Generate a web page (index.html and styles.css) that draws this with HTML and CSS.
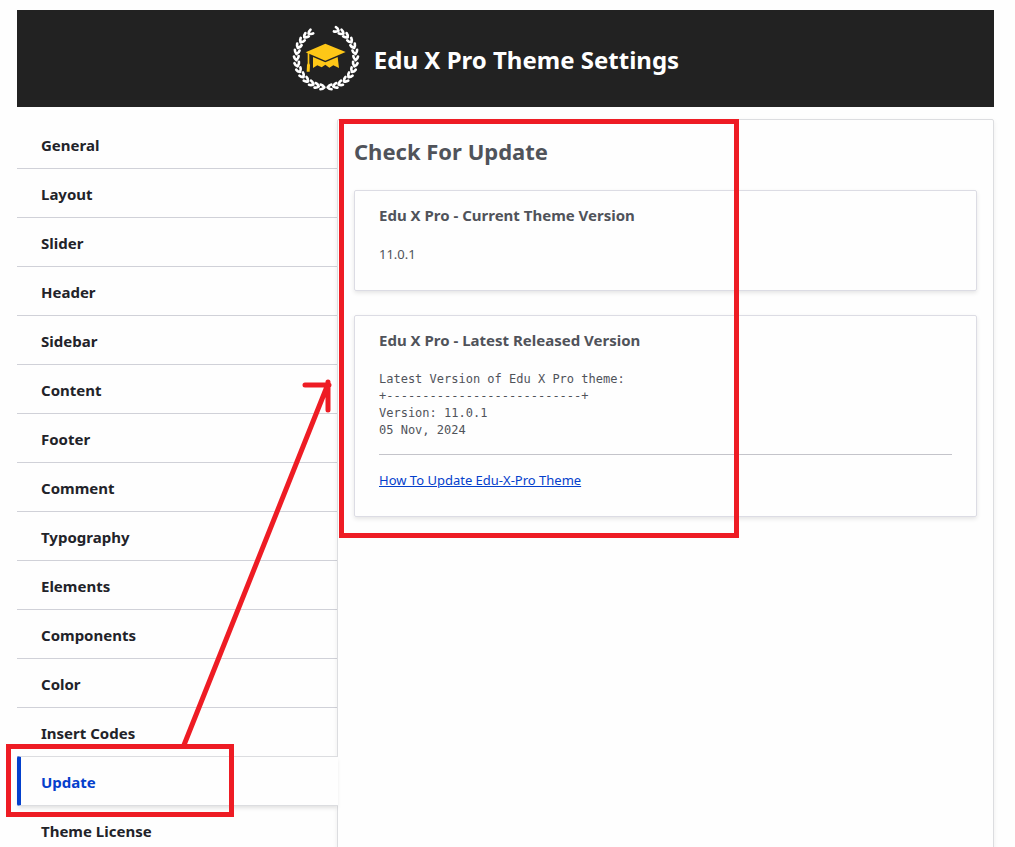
FILE: index.html
```
<!DOCTYPE html>
<html lang="en">
<head>
<meta charset="utf-8">
<title>Edu X Pro Theme Settings</title>
<link rel="stylesheet" href="styles.css">
</head>
<body>
<div class="page">
  <header class="header">
    <svg class="logo" viewBox="36 73 204 198" aria-hidden="true">
      <defs>
        <path id="leaf" d="M6 -89Q2 -95 -5 -96M5 -88Q0 -82 -6 -82"/>
        <g id="branch">
          <use href="#leaf" transform="rotate(32)"/>
          <use href="#leaf" transform="rotate(43)"/>
          <use href="#leaf" transform="rotate(55)"/>
          <use href="#leaf" transform="rotate(67)"/>
          <use href="#leaf" transform="rotate(79)"/>
          <use href="#leaf" transform="rotate(91)"/>
          <use href="#leaf" transform="rotate(103)"/>
          <use href="#leaf" transform="rotate(115)"/>
          <use href="#leaf" transform="rotate(127)"/>
          <use href="#leaf" transform="rotate(139)"/>
          <use href="#leaf" transform="rotate(151)"/>
          <use href="#leaf" transform="rotate(162)"/>
          <use href="#leaf" transform="rotate(173)"/>
        </g>
      </defs>
      <g fill="none" stroke="#fff" stroke-width="8" stroke-linecap="round">
        <use href="#branch" transform="translate(138 171)"/>
        <use href="#leaf" transform="translate(138 171) rotate(21)"/>
        <use href="#branch" transform="translate(138 171) scale(-1 1)"/>
      </g>
      <g fill="#fec717">
        <path d="M136 129L197 154L136 180L77 155Z"/>
        <path d="M99 169L136 185L173 169L177 202L160 194L148 201L136 192L125 200L112 194L99 202Z"/>
        <path d="M83 157H88V188L90 193L89 213H80L81 193L83 188Z"/>
      </g>
    </svg>
    <h1 class="title">Edu X Pro Theme Settings</h1>
  </header>
  <div class="body">
    <nav class="tabs" aria-label="Settings sections">
      <button class="tab" type="button">General</button>
      <button class="tab" type="button">Layout</button>
      <button class="tab" type="button">Slider</button>
      <button class="tab" type="button">Header</button>
      <button class="tab" type="button">Sidebar</button>
      <button class="tab" type="button">Content</button>
      <button class="tab" type="button">Footer</button>
      <button class="tab" type="button">Comment</button>
      <button class="tab" type="button">Typography</button>
      <button class="tab" type="button">Elements</button>
      <button class="tab" type="button">Components</button>
      <button class="tab" type="button">Color</button>
      <button class="tab" type="button">Insert Codes</button>
      <button class="tab tab-active" type="button" aria-current="page">Update</button>
      <button class="tab" type="button">Theme License</button>
    </nav>
    <main class="panel">
      <h2 class="heading">Check For Update</h2>
      <section class="card">
        <h3 class="card-title">Edu X Pro - Current Theme Version</h3>
        <p class="text">11.0.1</p>
      </section>
      <section class="card">
        <h3 class="card-title">Edu X Pro - Latest Released Version</h3>
        <pre class="release">Latest Version of Edu X Pro theme:
+---------------------------+
Version: 11.0.1
05 Nov, 2024</pre>
        <hr class="rule">
        <p class="text"><a class="link" href="#">How To Update Edu-X-Pro Theme</a></p>
      </section>
    </main>
  </div>
  <svg class="marks" aria-hidden="true">
    <g fill="none" stroke="#ee1c24" stroke-width="5">
      <path d="M341.500 121.500H736.500V535.500H341.500Z"/>
      <path d="M8.500 746.500H231.500V814.500H8.500Z"/>
      <path d="M184 745L328 384M305 385H329M328 382V410" stroke-linecap="round"/>
    </g>
  </svg>
</div>
</body>
</html>
```
FILE: styles.css
```
* { box-sizing: border-box; }
body {
  margin: 0;
  background: #fefefe;
  color: #50535a;
  font: 13px/22px "Noto Sans", "Open Sans", sans-serif;
}
.page {
  position: relative;
  display: flex;
  flex-direction: column;
  height: 100vh;
  overflow: hidden;
  padding: 10px 21px 0 17px;
}
.header {
  display: flex;
  flex: none;
  align-items: center;
  justify-content: center;
  gap: 14px;
  padding: 15px 40px 16px 0;
  background: #222;
}
.logo { width: 68px; height: 66px; }
.title {
  margin: 0;
  padding-top: 4px;
  color: #fff;
  font-size: 24px;
  line-height: 32px;
}
.body {
  display: flex;
  flex: 1 0 auto;
  margin-top: 12px;
}
.tabs {
  display: flex;
  flex: none;
  flex-direction: column;
  width: 321px;
  margin-right: -1px;
  padding-top: 1px;
}
.tab {
  height: 49px;
  margin-right: 1px;
  padding: 1px 24px 0;
  border: 0;
  border-bottom: 1px solid #d0d1d8;
  background: none;
  color: #222329;
  font: bold 15px/24px "Noto Sans", "Open Sans", sans-serif;
  text-align: left;
}
.tab-active {
  position: relative;
  z-index: 1;
  height: 50px;
  margin: -1px 0 0;
  padding-left: 20px;
  border-top: 1px solid #dcdde0;
  border-bottom-color: #dcdde0;
  border-left: 4px solid #0440cc;
  border-radius: 2px 0 0 2px;
  background: #fefefe;
  box-shadow: 0 3px 4px -1px rgba(0, 0, 0, 0.12);
  color: #0440cc;
}
.panel {
  flex: 1;
  min-width: 0;
  padding: 16px;
  border: 1px solid #dcdde0;
  border-radius: 2px;
  box-shadow: 0 2px 5px rgba(0, 0, 0, 0.07);
}
.heading {
  margin: 0 0 24px;
  font-size: 22px;
  line-height: 30px;
}
.card {
  margin-bottom: 24px;
  padding: 12px 24px 25px;
  border: 1px solid #dcdce4;
  border-radius: 2px;
  box-shadow: 0 2px 4px rgba(0, 0, 0, 0.1);
}
.card-title {
  margin: 0 0 16px;
  font-size: 15px;
  line-height: 24px;
}
.text { margin: 0; }
.release {
  margin: 19px 0 0;
  font: 12px/17px "DejaVu Sans Mono", "Liberation Mono", monospace;
}
.rule {
  margin: 15px 0 14px;
  border: 0;
  border-top: 1px solid #c4c4ca;
}
.link { color: #0440cc; }
.marks {
  position: absolute;
  z-index: 2;
  top: 0;
  left: 0;
  width: 100%;
  height: 100%;
  pointer-events: none;
}
```
